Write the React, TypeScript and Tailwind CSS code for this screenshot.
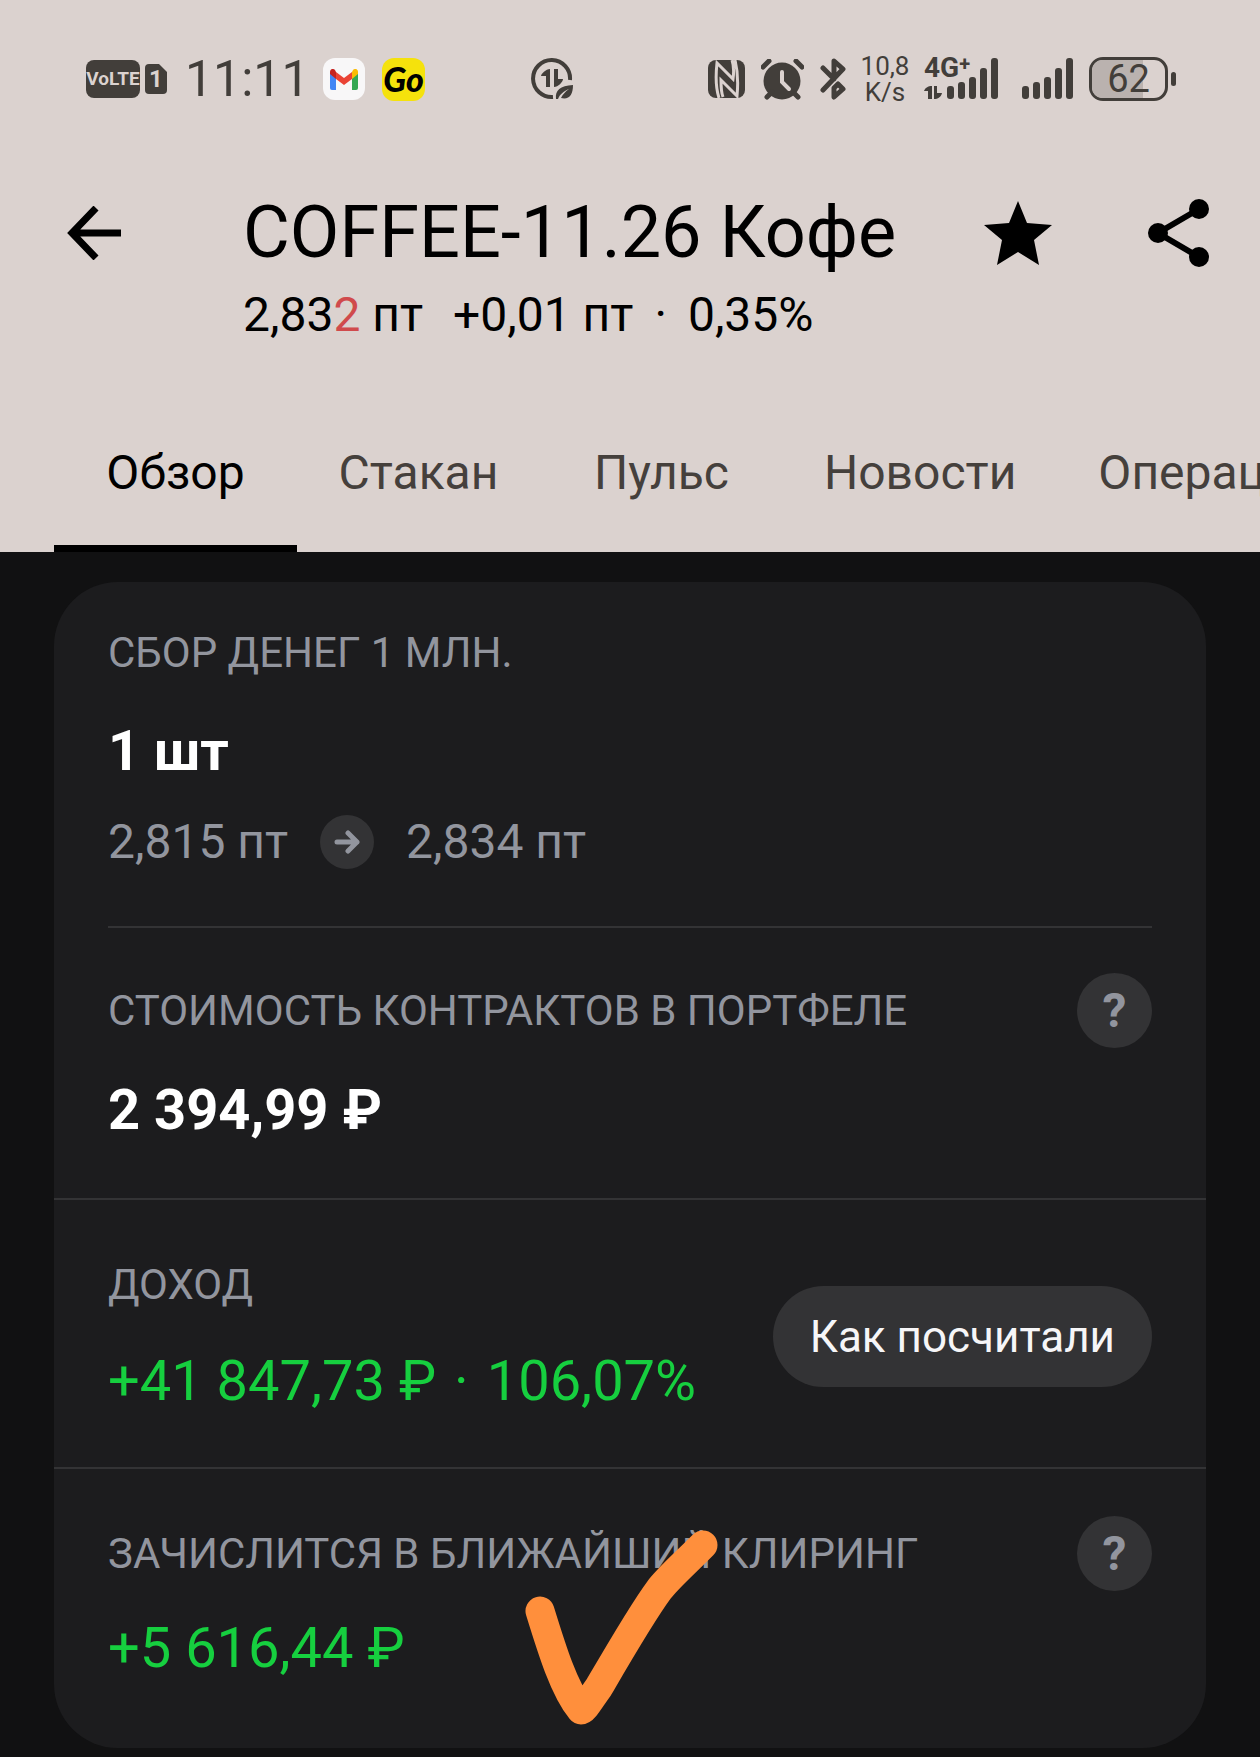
import type { ReactNode } from "react";

const tabs = ["Обзор", "Стакан", "Пульс", "Новости", "Операции"];

function SignalBars() {
  return (
    <svg width="51" height="42" viewBox="0 0 51 42" fill="currentColor">
      <rect x="0" y="28" width="7" height="13" rx="3" />
      <rect x="11" y="24" width="7" height="17" rx="3" />
      <rect x="22" y="19" width="7" height="22" rx="3" />
      <rect x="33" y="10" width="7" height="31" rx="3" />
      <rect x="44" y="0" width="7" height="41" rx="3" />
    </svg>
  );
}

function GmailIcon() {
  return (
    <span className="flex h-[42px] w-[42px] items-center justify-center rounded-xl bg-[#f8f7f8]">
      <svg width="28" height="21" viewBox="0 0 28 21">
        <path d="M0 4v15a2 2 0 0 0 2 2h4V8z" fill="#4285f4" />
        <path d="M28 4v15a2 2 0 0 1-2 2h-4V8z" fill="#34a853" />
        <path d="M22 3v7l6-5V3c0-3-3-4-5-2z" fill="#fbbc04" />
        <path d="M6 10V3l8 6 8-6v7l-8 6z" fill="#ea4335" />
        <path d="M0 3v2l6 5V3L5 1C3-1 0 0 0 3z" fill="#c5221f" />
      </svg>
    </span>
  );
}

function DataSaverIcon() {
  return (
    <svg width="42" height="42" viewBox="0 0 42 42" fill="none">
      <path d="M39 22a18.500 18.500 0 1 0-17 17" stroke="currentColor" strokeWidth="4" />
      <path d="M19 11v18h-4V18h-5c0-2 5-7 9-7zM23 29V11h4v10h5c0 3-5 8-9 8z" fill="currentColor" />
      <path d="M25 41c-1-9 4-13 17-14 0 10-4 15-12 13 2-4 4-6 8-9-5 2-9 5-11 10z" fill="currentColor" />
    </svg>
  );
}

function NfcIcon() {
  return (
    <svg width="37" height="38" viewBox="0 0 37 38">
      <rect width="37" height="38" rx="8" fill="currentColor" />
      <path
        d="M11 38C7 26 8 12 9 3L25 19C26 12 26 6 24 0M27 0c3 12 3 26 2 36L13 20c0 8 0 12 2 17"
        fill="none"
        stroke="#dbd2cf"
        strokeWidth="3"
      />
    </svg>
  );
}

function AlarmIcon() {
  return (
    <svg width="43" height="41" viewBox="0 0 43 41" fill="none" stroke="currentColor" strokeLinecap="round">
      <circle cx="21" cy="22" r="18.500" fill="currentColor" stroke="none" />
      <path d="M2 8l6-6M41 8l-6-6M6 38l5-5M37 38l-5-5" strokeWidth="5" />
      <path d="M21 13v10l7 7" stroke="#dbd2cf" strokeWidth="4" />
    </svg>
  );
}

function BluetoothIcon() {
  return (
    <svg width="26" height="42" viewBox="0 0 26 42" fill="none" stroke="currentColor" strokeWidth="5" strokeLinecap="round" strokeLinejoin="round">
      <path d="M3 10l11 11V3l9 8L3 32" />
      <path d="M14 30l4-4 5 5-9 8z" />
    </svg>
  );
}

function Battery() {
  return (
    <div className="flex items-center gap-[3px]">
      <div className="relative flex h-11 w-[79px] items-center justify-center rounded-[14px] border-[3px] border-[#423e3a]">
        <span className="absolute inset-y-0 left-0 w-[51px] rounded-l-[10px] bg-[#bab2af]" />
        <span className="relative text-[38px] leading-none">62</span>
      </div>
      <span className="h-[14px] w-[5px] rounded-full bg-[#423e3a]" />
    </div>
  );
}

function StatusBar() {
  return (
    <div className="flex h-[158px] items-center pr-[84px] pl-[86px] text-[#423e3a]">
      <div className="flex items-center">
        <span className="flex h-[38px] w-[54px] items-center justify-center rounded-lg bg-[#423e3a] text-[19px] font-bold text-[#dbd2cf]">
          VoLTE
        </span>
        <span className="relative ml-[5px] flex h-[30px] w-[22px] items-center justify-center text-2xl font-bold text-[#dbd2cf]">
          <svg className="absolute inset-0" width="22" height="30" viewBox="0 0 22 30">
            <path d="M4 0h10l8 8v18a4 4 0 0 1-4 4H4a4 4 0 0 1-4-4V4a4 4 0 0 1 4-4z" fill="#423e3a" />
          </svg>
          <span className="relative">1</span>
        </span>
        <span className="ml-[18px] w-[118px] text-center text-[50px] leading-none">11:11</span>
        <span className="ml-5">
          <GmailIcon />
        </span>
        <span className="ml-[17px] flex h-[43px] w-[43px] items-center justify-center rounded-xl bg-[#f5e20c] font-[Lato,sans-serif] text-[34px] leading-none font-black text-black italic">
          Go
        </span>
      </div>
      <div className="ml-[106px]">
        <DataSaverIcon />
      </div>
      <div className="ml-auto flex items-center">
        <NfcIcon />
        <span className="ml-4">
          <AlarmIcon />
        </span>
        <span className="ml-4">
          <BluetoothIcon />
        </span>
        <span className="ml-[14px] w-[50px] text-center text-[26px] leading-[26px]">
          10,8
          <br />
          K/s
        </span>
        <span className="ml-[14px] flex">
          <span className="relative h-[42px] w-[23px]">
            <span className="absolute -top-1 left-0 flex text-[28px] leading-7 font-bold">
              4G
              <span className="text-xl leading-5">+</span>
            </span>
            <svg className="absolute bottom-[1px] left-0" width="18" height="13" viewBox="0 0 18 13" fill="currentColor">
              <path d="M8 0v13H4V5H0c1-3 4-5 8-5zM10 13V0h3v7h5c-1 4-4 6-8 6z" />
            </svg>
          </span>
          <SignalBars />
        </span>
        <span className="ml-6">
          <SignalBars />
        </span>
        <span className="ml-4">
          <Battery />
        </span>
      </div>
    </div>
  );
}

function Header() {
  return (
    <header className="bg-[#dbd2cf] text-black">
      <StatusBar />
      <div className="flex items-start pt-[35px] pr-[50px] pb-[50px] pl-[67px]">
        <button aria-label="Назад" className="flex h-20 items-center">
          <svg width="54" height="54" viewBox="0 0 54 54" fill="none" stroke="currentColor" strokeWidth="7">
            <path d="M29 2L5 27l24 25M4 27h50" />
          </svg>
        </button>
        <div className="ml-[122px] flex-1 whitespace-nowrap">
          <h1 className="text-[72px] leading-20">COFFEE-11.26 Кофе</h1>
          <p className="mt-[14px] flex text-5xl leading-14">
            <span>
              2,83<span className="text-[#d04a4c]">2</span> пт
            </span>
            <span className="ml-[30px]">+0,01 пт</span>
            <span className="mx-[21px]">·</span>
            <span>0,35%</span>
          </p>
        </div>
        <button aria-label="В избранное" className="flex h-20 items-center">
          <svg width="68" height="64" viewBox="0 0 68 64" fill="currentColor">
            <path d="M34 0l9 22 25 2-18 15 5 25-21-13-21 13 5-25L0 24l25-2z" />
          </svg>
        </button>
        <button aria-label="Поделиться" className="ml-24 flex h-20 items-center">
          <svg width="62" height="68" viewBox="0 0 62 68" fill="currentColor">
            <path d="M51 10L10 34l41 24" fill="none" stroke="currentColor" strokeWidth="6" />
            <circle cx="51" cy="10" r="10" />
            <circle cx="10" cy="34" r="10" />
            <circle cx="51" cy="58" r="10" />
          </svg>
        </button>
      </div>
      <nav className="flex overflow-hidden pl-[54px]">
        {tabs.map((tab, i) => (
          <button
            key={tab}
            className={`h-[159px] min-w-[243px] shrink-0 border-y-[7px] border-t-transparent px-[41px] text-5xl ${
              i === 0 ? "border-b-black text-black" : "border-b-transparent text-[#45403c]"
            }`}
          >
            {tab}
          </button>
        ))}
      </nav>
    </header>
  );
}

function Label({ children }: { children: ReactNode }) {
  return <h2 className="text-[42px] leading-[50px] text-[#92959e] uppercase">{children}</h2>;
}

function HelpButton() {
  return (
    <button
      aria-label="Подсказка"
      className="flex h-[75px] w-[75px] shrink-0 items-center justify-center rounded-full bg-[#333335] text-5xl font-bold text-[#92959e]"
    >
      ?
    </button>
  );
}

export default function App() {
  return (
    <div className="min-h-screen overflow-hidden bg-[#111112] font-[Roboto,'Noto_Sans',sans-serif]">
      <Header />
      <main className="mx-[54px] mt-[30px] mb-[9px] rounded-[64px] bg-[#1c1c1e]">
        <section className="mx-[54px] border-b-2 border-[#333335] pt-[46px] pb-[57px]">
          <Label>Сбор денег 1 млн.</Label>
          <p className="mt-[41px] text-[56px] leading-16 font-bold text-white">1 шт</p>
          <div className="mt-8 flex h-[54px] items-center text-5xl text-[#92959e]">
            <span>2,815 пт</span>
            <span className="mx-8 flex h-[54px] w-[54px] items-center justify-center rounded-full bg-[#333335]">
              <svg width="26" height="24" viewBox="0 0 26 24" fill="none" stroke="currentColor" strokeWidth="5" strokeLinecap="round" strokeLinejoin="round">
                <path d="M3 12h20M14 3l9 9-9 9" />
              </svg>
            </span>
            <span>2,834 пт</span>
          </div>
        </section>

        <section className="border-b-2 border-[#333335] px-[54px] pt-[45px] pb-14">
          <div className="flex items-center justify-between">
            <Label>Стоимость контрактов в портфеле</Label>
            <HelpButton />
          </div>
          <p className="mt-[30px] text-[56px] leading-16 font-bold text-white">2 394,99 ₽</p>
        </section>

        <section className="flex items-center justify-between border-b-2 border-[#333335] px-[54px] pt-[60px] pb-[54px]">
          <div>
            <Label>Доход</Label>
            <p className="mt-[39px] flex text-[56px] leading-16 text-[#16cf3f]">
              <span>+41 847,73 ₽</span>
              <span className="mx-[18px]">·</span>
              <span>106,07%</span>
            </p>
          </div>
          <button className="h-[101px] rounded-full bg-[#333335] px-[37px] text-[44px] whitespace-nowrap text-[#f6f6f8]">
            Как посчитали
          </button>
        </section>

        <section className="relative px-[54px] pt-[47px] pb-[68px]">
          <div className="flex items-center justify-between">
            <Label>Зачислится в ближайший клиринг</Label>
            <HelpButton />
          </div>
          <p className="mt-[25px] text-[56px] leading-16 text-[#16cf3f]">+5 616,44 ₽</p>
          {/* hand-drawn tick over the row */}
          <svg
            className="absolute top-[60px] left-[470px]"
            width="194"
            height="196"
            viewBox="0 0 194 196"
            fill="none"
            stroke="#ff8f3c"
            strokeWidth="29"
            strokeLinecap="round"
            strokeLinejoin="round"
          >
            <path d="M16 82C28 121 40 160 57 181C60 181 65 172 75 158C96 122 118 84 135 61C144 49 158 37 179 16" />
          </svg>
        </section>
      </main>
    </div>
  );
}
